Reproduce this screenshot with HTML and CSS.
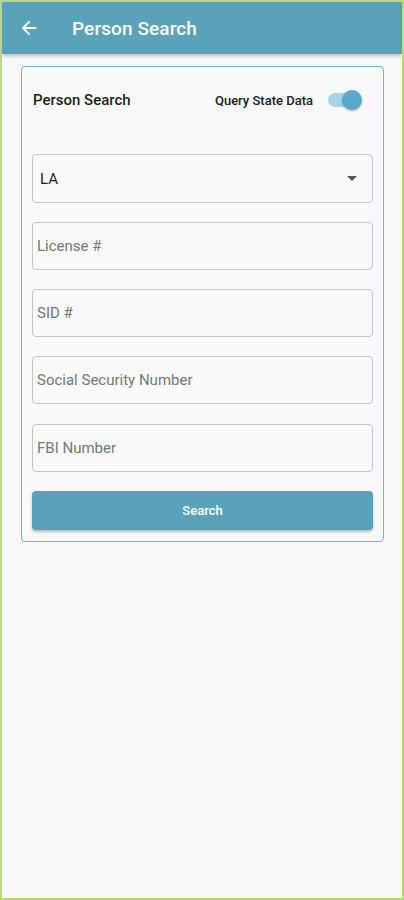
FILE: index.html
```html
<!DOCTYPE html>
<html>
<head>
<meta charset="utf-8">
<link rel="stylesheet" href="styles.css">
</head>
<body>
<div class="frame">
  <header class="appbar">
    <svg class="back" width="22" height="22" viewBox="0 0 24 24"><path d="M20 11H7.83l5.59-5.59L12 4l-8 8 8 8 1.41-1.41L7.83 13H20v-2z" fill="#fff"/></svg>
    <span class="title">Person Search</span>
  </header>
  <main class="content">
    <section class="card">
      <div class="card-head">
        <span class="card-title">Person Search</span>
        <div class="toggle-wrap">
          <span class="toggle-label">Query State Data</span>
          <span class="toggle"><span class="track"></span><span class="thumb"></span></span>
        </div>
      </div>
      <div class="field select">
        <span class="value">LA</span>
        <span class="caret"></span>
      </div>
      <div class="field"><span class="ph">License #</span></div>
      <div class="field"><span class="ph">SID #</span></div>
      <div class="field gap20"><span class="ph">Social Security Number</span></div>
      <div class="field"><span class="ph">FBI Number</span></div>
      <button class="btn">Search</button>
    </section>
  </main>
</div>
</body>
</html>
```
FILE: styles.css
```css
* { box-sizing: border-box; }
html, body { margin: 0; padding: 0; }
body {
  font-family: Roboto, "Noto Sans", "Liberation Sans", sans-serif;
  background: #fff;
}
.frame {
  width: 404px;
  height: 900px;
  border: 2px solid #b6dc72;
  background: #f9f9f9;
  overflow: hidden;
}
.appbar {
  height: 52px;
  background: #5aa2ba;
  display: flex;
  align-items: center;
  padding-left: 16px;
  box-shadow: 0 2px 4px rgba(0,0,0,0.25);
  position: relative;
}
.back { display: block; }
.title {
  color: #fff;
  font-size: 19px;
  font-weight: 500;
  margin-left: 32px;
  letter-spacing: 0.1px;
}
.content {
  padding: 12px 18px 0 19px;
}
.card {
  border: 1px solid #70b8d3;
  border-radius: 4px;
  padding: 0 10px 11px 10px;
  background: #f9f9f9;
}
.card-head {
  height: 44px;
  margin-top: 11px;
  margin-bottom: 32px;
  display: flex;
  align-items: center;
  justify-content: space-between;
}
.card-title {
  font-size: 15px;
  font-weight: 500;
  color: #1f1f1f;
  padding-left: 1px;
}
.toggle-wrap {
  display: flex;
  align-items: center;
}
.toggle-label {
  font-size: 13px;
  font-weight: 500;
  color: #222;
}
.toggle {
  position: relative;
  width: 36px;
  height: 24px;
  margin-left: 13px;
  margin-right: 11px;
}
.track {
  position: absolute;
  left: 2px;
  top: 5px;
  width: 32px;
  height: 14px;
  border-radius: 7px;
  background: #a8d4e8;
}
.thumb {
  position: absolute;
  right: 0;
  top: 2px;
  width: 20px;
  height: 20px;
  border-radius: 50%;
  background: #5aa9cc;
  box-shadow: 0 1px 2px rgba(0,0,0,0.3);
}
.field {
  height: 48px;
  border: 1px solid #c4c4c4;
  border-radius: 4px;
  display: flex;
  align-items: center;
  padding-left: 4px;
  margin-bottom: 19px;
  font-size: 15px;
}
.field.gap20 { margin-bottom: 20px; }
.field.select {
  height: 49px;
  padding-left: 7px;
  padding-right: 15px;
  justify-content: space-between;
}
.value { color: #1f1f1f; }
.ph { color: #777; }
.caret {
  width: 0;
  height: 0;
  border-left: 5px solid transparent;
  border-right: 5px solid transparent;
  border-top: 5px solid #555;
}
.btn {
  display: block;
  width: 100%;
  height: 39px;
  border: none;
  border-radius: 4px;
  background: #5aa2ba;
  color: #fff;
  font-family: inherit;
  font-size: 13px;
  font-weight: 500;
  box-shadow: 0 2px 3px rgba(0,0,0,0.25);
}
```
